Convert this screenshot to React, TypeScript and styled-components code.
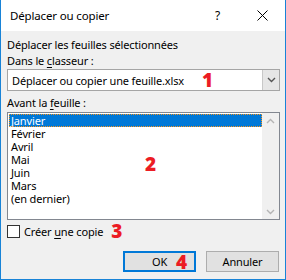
import React from 'react';
import styled, { createGlobalStyle } from 'styled-components';

const GlobalStyle = createGlobalStyle`
  html, body {
    margin: 0;
    padding: 0;
    background: #ffffff;
  }
  body {
    font-family: "Noto Sans", "Segoe UI", sans-serif;
    font-size: 11px;
    letter-spacing: -0.15px;
    color: #000;
  }
`;

const Window = styled.div`
  position: relative;
  width: 286px;
  height: 280px;
  box-sizing: border-box;
  border: 1px solid #1883d7;
  border-top: none;
  background: #f0f0f0;
  display: flex;
  flex-direction: column;
`;

const TitleBar = styled.div`
  height: 31px;
  flex-shrink: 0;
  background: #ffffff;
  display: flex;
  align-items: center;
  padding-left: 9px;
`;

const Title = styled.div`
  flex: 1;
  font-size: 11.5px;
`;

const TitleButton = styled.div`
  width: 45px;
  height: 31px;
  display: flex;
  align-items: center;
  justify-content: center;
  font-size: 12px;
`;

const Body = styled.div`
  flex: 1;
  display: flex;
  flex-direction: column;
  padding: 6px 5px 0 6px;
`;

const Label = styled.div<{ $gap?: number }>`
  height: 16px;
  line-height: 16px;
  margin-top: ${(p) => p.$gap ?? 0}px;
  white-space: nowrap;
`;

const Key = styled.span`
  text-decoration: underline;
  text-underline-offset: 2px;
`;

const Badge = styled.span`
  font-family: "Open Sans", "Noto Sans", sans-serif;
  font-weight: 800;
  font-size: 19px;
  letter-spacing: 0;
  line-height: 1;
  color: #ec1c24;
`;

const Combo = styled.div`
  height: 22px;
  box-sizing: border-box;
  border: 1px solid #a5a5a5;
  background: #ffffff;
  display: flex;
`;

const ComboText = styled.div`
  flex: 1;
  display: flex;
  align-items: center;
  padding-left: 4px;
  gap: 18px;
  white-space: nowrap;
`;

const ComboButton = styled.div`
  width: 16px;
  background: #e6e6e6;
  border-left: 1px solid #c8c8c8;
  display: flex;
  align-items: center;
  justify-content: center;
`;

const ListBox = styled.div`
  position: relative;
  margin-top: 1px;
  height: 108px;
  box-sizing: border-box;
  border: 1px solid #828790;
  background: #ffffff;
  display: flex;
`;

const List = styled.div`
  flex: 1;
  padding: 1px 0 0 1px;
`;

const Row = styled.div<{ $selected?: boolean }>`
  height: 13px;
  line-height: 13px;
  padding-left: 2px;
  white-space: nowrap;
  background: ${(p) => (p.$selected ? '#0078d7' : 'transparent')};
  color: ${(p) => (p.$selected ? '#ffffff' : '#000000')};
  outline: ${(p) => (p.$selected ? '1px dotted #f7941d' : 'none')};
  outline-offset: -1px;
`;

const ScrollBar = styled.div`
  width: 17px;
  background: #f0f0f0;
  display: flex;
  flex-direction: column;
  justify-content: space-between;
  align-items: center;
  padding: 5px 0 4px;
`;

const ListBadge = styled(Badge)`
  position: absolute;
  left: 137px;
  top: 42px;
`;

const CheckRow = styled.label`
  margin-top: 4px;
  height: 14px;
  display: flex;
  align-items: center;
  gap: 4px;
  white-space: nowrap;
`;

const CheckBox = styled.span`
  width: 13px;
  height: 13px;
  box-sizing: border-box;
  border: 1px solid #333333;
  background: #ffffff;
`;

const CheckBadge = styled(Badge)`
  margin-left: 4px;
`;

const Buttons = styled.div`
  margin-top: 13px;
  display: flex;
  justify-content: flex-end;
  gap: 10px;
  padding-right: 1px;
`;

const Button = styled.div<{ $default?: boolean }>`
  position: relative;
  width: 73px;
  height: 21px;
  box-sizing: border-box;
  background: #e1e1e1;
  border: ${(p) => (p.$default ? '2px solid #0078d7' : '1px solid #adadad')};
  display: flex;
  align-items: center;
  justify-content: center;
`;

const ButtonBadge = styled(Badge)`
  position: absolute;
  left: 51px;
  top: 0px;
`;

const Chevron = ({ up, color }: { up?: boolean; color: string }) => (
  <svg width="9" height="6" viewBox="0 0 9 6">
    <path
      d={up ? 'M1 5 L4.5 1.5 L8 5' : 'M1 1 L4.5 4.5 L8 1'}
      fill="none"
      stroke={color}
      strokeWidth="1.4"
    />
  </svg>
);

const months = ['Janvier', 'Février', 'Avril', 'Mai', 'Juin', 'Mars', '(en dernier)'];

export default function App() {
  return (
    <>
      <GlobalStyle />
      <Window>
        <TitleBar>
          <Title>Déplacer ou copier</Title>
          <TitleButton>?</TitleButton>
          <TitleButton>
            <svg width="11" height="11" viewBox="0 0 11 11">
              <path d="M0.5 0.5 L10.5 10.5 M10.5 0.5 L0.5 10.5" stroke="#000" strokeWidth="1" />
            </svg>
          </TitleButton>
        </TitleBar>
        <Body>
          <Label>Déplacer les feuilles sélectionnées</Label>
          <Label>
            Dans le <Key>c</Key>lasseur :
          </Label>
          <Combo>
            <ComboText>
              <span>Déplacer ou copier une feuille.xlsx</span>
              <Badge>1</Badge>
            </ComboText>
            <ComboButton>
              <Chevron color="#555555" />
            </ComboButton>
          </Combo>
          <Label $gap={4}>
            Avant la <Key>f</Key>euille :
          </Label>
          <ListBox>
            <List>
              {months.map((m, i) => (
                <Row key={m} $selected={i === 0}>
                  {m}
                </Row>
              ))}
            </List>
            <ScrollBar>
              <Chevron up color="#b4b4b4" />
              <Chevron color="#b4b4b4" />
            </ScrollBar>
            <ListBadge>2</ListBadge>
          </ListBox>
          <CheckRow>
            <CheckBox />
            <span>
              Créer <Key>u</Key>ne copie
            </span>
            <CheckBadge>3</CheckBadge>
          </CheckRow>
          <Buttons>
            <Button $default>
              OK
              <ButtonBadge>4</ButtonBadge>
            </Button>
            <Button>Annuler</Button>
          </Buttons>
        </Body>
      </Window>
    </>
  );
}
